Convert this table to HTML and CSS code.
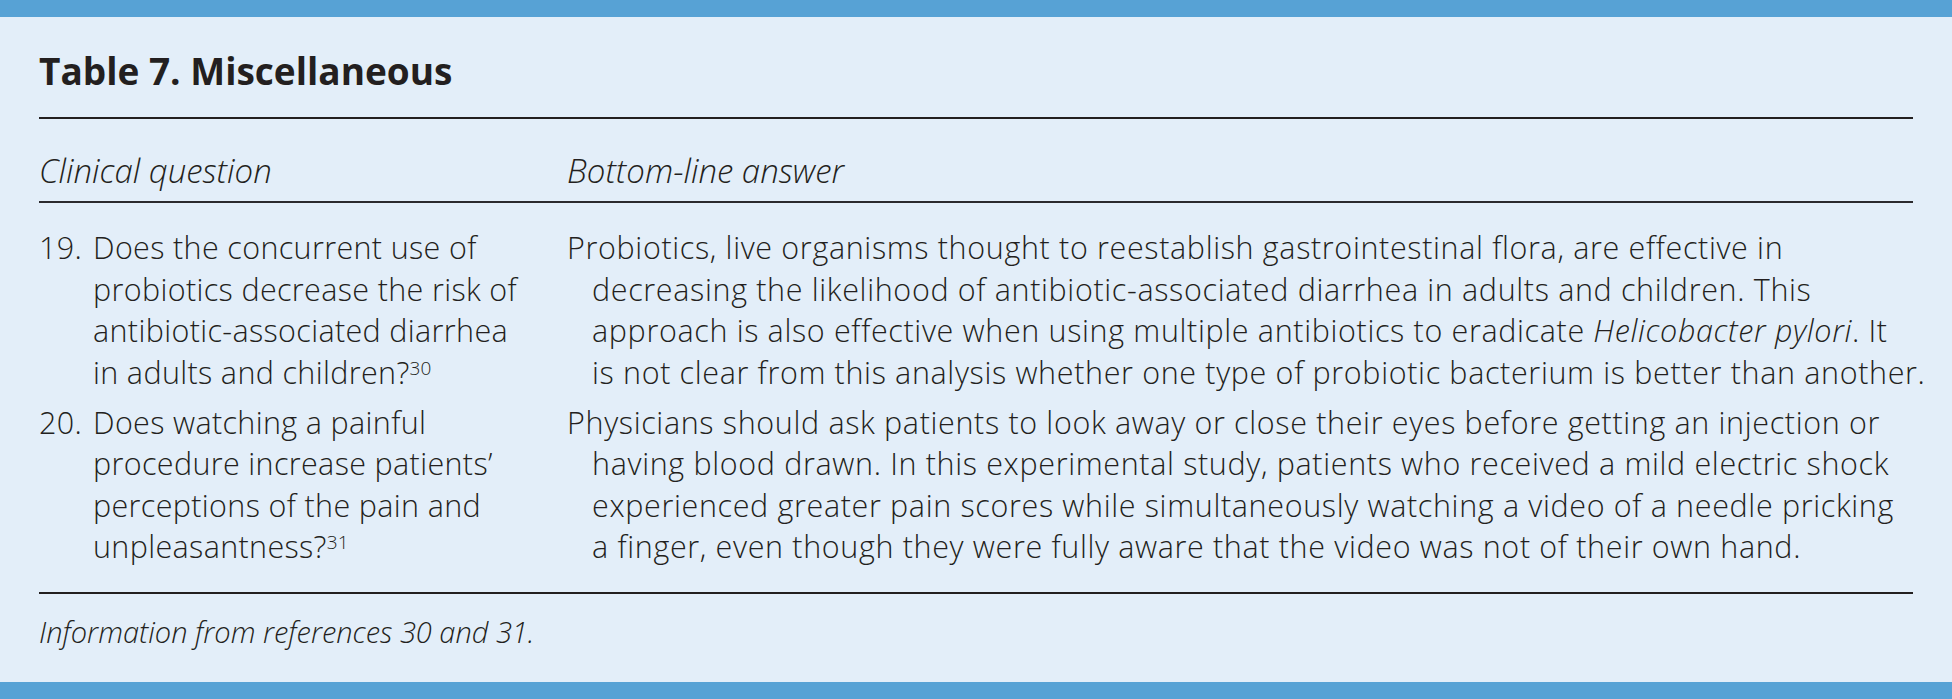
FILE: index.html
```html
<!DOCTYPE html>
<html lang="en">
<head>
<meta charset="utf-8">
<title>Table 7. Miscellaneous</title>
<link rel="stylesheet" href="styles.css">
</head>
<body>
<div class="page">
  <div class="bar"></div>
  <section class="panel">
    <h1 class="title">Table 7. Miscellaneous</h1>
    <div class="grid head">
      <div class="th">Clinical question</div>
      <div class="th">Bottom-line answer</div>
    </div>
    <div class="rows">
      <div class="grid row">
        <div class="q"><span class="num">19.</span><span class="qtext">Does the concurrent use of<br>probiotics decrease the risk of<br>antibiotic-associated diarrhea<br>in adults and children?<sup>30</sup></span></div>
        <div class="a">Probiotics, live organisms thought to reestablish gastrointestinal flora, are effective in<br>decreasing the likelihood of antibiotic-associated diarrhea in adults and children. This<br>approach is also effective when using multiple antibiotics to eradicate <em>Helicobacter pylori</em>. It<br>is not clear from this analysis whether one type of probiotic bacterium is better than another.</div>
      </div>
      <div class="grid row">
        <div class="q"><span class="num">20.</span><span class="qtext">Does watching a painful<br>procedure increase patients’<br>perceptions of the pain and<br>unpleasantness?<sup>31</sup></span></div>
        <div class="a">Physicians should ask patients to look away or close their eyes before getting an injection or<br>having blood drawn. In this experimental study, patients who received a mild electric shock<br>experienced greater pain scores while simultaneously watching a video of a needle pricking<br>a finger, even though they were fully aware that the video was not of their own hand.</div>
      </div>
    </div>
    <p class="note">Information from references 30 and 31.</p>
  </section>
  <div class="bar bar-bottom"></div>
</div>
</body>
</html>
```
FILE: styles.css
```css
html, body {
  margin: 0;
  padding: 0;
}
body {
  background: #e3eef9;
  color: #231f20;
  font-family: "Open Sans", "Noto Sans", sans-serif;
}
.page {
  display: flex;
  flex-direction: column;
  height: 699px;
}
.bar {
  height: 17px;
  background: #57a2d5;
  flex: none;
}
.bar-bottom {
  margin-top: auto;
}
.panel {
  padding: 0 39px;
}
.title {
  margin: 0;
  padding: 32px 0 24px;
  font-size: 37px;
  line-height: 44px;
  font-weight: 700;
  border-bottom: 2px solid #231f20;
}
.grid {
  display: grid;
  grid-template-columns: 528px 1fr;
}
.head {
  padding: 32px 0 10px;
  border-bottom: 2px solid #2b2a2e;
}
.th {
  font-style: italic;
  font-weight: 300;
  font-size: 33px;
  line-height: 40px;
}
.rows {
  display: flex;
  flex-direction: column;
  gap: 8.5px;
  padding: 24px 0 24.5px;
  border-bottom: 2px solid #231f20;
}
.row {
  font-size: 30.5px;
  font-weight: 300;
  line-height: 41.5px;
  letter-spacing: 0.65px;
  white-space: nowrap;
}
.q {
  display: flex;
  letter-spacing: 0.35px;
}
.num {
  width: 54px;
  flex: none;
}
.a {
  padding-left: 25px;
  text-indent: -25px;
}
.a em {
  font-style: italic;
}
sup {
  font-size: 19px;
  line-height: 0;
  vertical-align: 0.45em;
  letter-spacing: 0;
}
.note {
  margin: 0;
  padding-top: 20px;
  font-style: italic;
  font-weight: 300;
  font-size: 29px;
  line-height: 36px;
}
```
